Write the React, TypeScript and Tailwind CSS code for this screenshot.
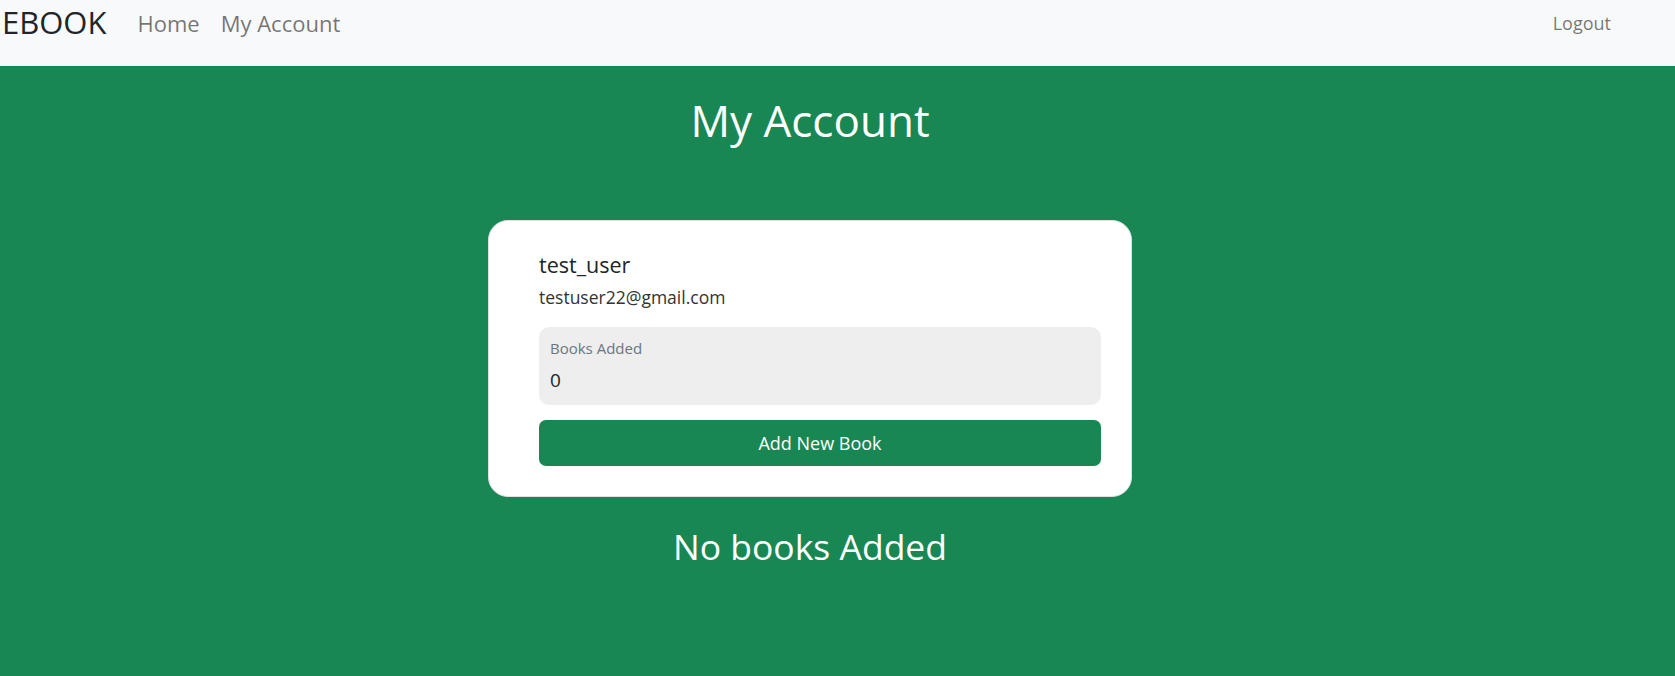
export default function App() {
  return (
    <div className="min-h-[676px] bg-[#198754] font-['Open_Sans',sans-serif]">
      <nav className="h-[66px] bg-[#f8f9fa] flex items-start">
        <a href="#" className="ml-[2px] mt-[4px] text-[31px] leading-[36px] text-[#212529]">EBOOK</a>
        <div className="flex ml-[31px] mt-[9px] gap-[21px] text-[22px] leading-[28px] text-black/55">
          <a href="#">Home</a>
          <a href="#">My Account</a>
        </div>
        <a href="#" className="ml-auto mr-[64px] mt-[11px] text-[18px] leading-[24px] text-black/55">Logout</a>
      </nav>
      <main className="w-[1620px] flex flex-col items-center pt-[28px] pb-[40px]">
        <h1 className="text-[44px] leading-[52px] text-white">My Account</h1>
        <div className="mt-[74px] w-[644px] bg-white border border-[#dee2e6] rounded-[20px] pl-[50px] pr-[30px] pt-[32px] pb-[30px]">
          <div className="text-[21.5px] leading-[24px] text-[#212529]">test_user</div>
          <div className="mt-[8px] text-[17.5px] leading-[24px] text-[#333]">testuser22@gmail.com</div>
          <div className="mt-[18px] bg-[#eeeeee] rounded-[10px] px-[11px] pt-[11px] pb-[13px]">
            <div className="text-[15px] leading-[20px] text-[#6c757d]">Books Added</div>
            <div className="mt-[10px] text-[19px] leading-[24px] text-[#212529]">0</div>
          </div>
          <button className="mt-[15px] w-full h-[46px] bg-[#198754] rounded-[7px] text-white text-[18px]">
            Add New Book
          </button>
        </div>
        <h2 className="mt-[27px] text-[35.5px] leading-[44px] text-white">No books Added</h2>
      </main>
    </div>
  );
}
